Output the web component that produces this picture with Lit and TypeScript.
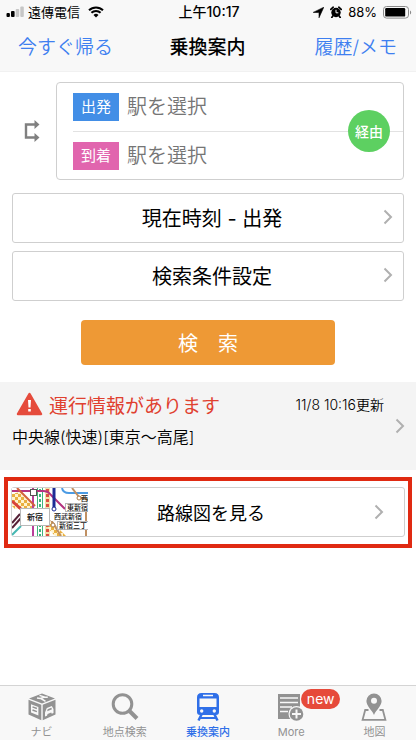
import { LitElement, html, css, svg } from "lit";
import { customElement, property } from "lit/decorators.js";
import { classMap } from "lit/directives/class-map.js";

const base = css`
  * {
    box-sizing: border-box;
  }
  button,
  input {
    font: inherit;
    color: inherit;
    margin: 0;
    padding: 0;
    border: 0;
    background: none;
  }
  svg {
    display: block;
    flex: none;
  }
`;

const chevron = html`<svg class="chevron" width="10" height="16" viewBox="0 0 10 16" aria-hidden="true">
  <path d="M1.5 1.5 8 8l-6.5 6.5" fill="none" stroke="#b0b0b0" stroke-width="2" />
</svg>`;

@customElement("status-bar")
class StatusBar extends LitElement {
  static styles = [
    base,
    css`
      :host {
        display: grid;
        grid-template-columns: 1fr auto 1fr;
        align-items: center;
        height: 24px;
        padding: 0 4px 0 6px;
        font-size: 13px;
        line-height: 24px;
      }
      .side {
        display: flex;
        align-items: center;
        gap: 4px;
      }
      .right {
        justify-content: flex-end;
        gap: 6px;
      }
      .wifi {
        margin-left: 4px;
      }
      .time {
        font-size: 14px;
        font-weight: 500;
      }
      .level {
        font-size: 13px;
      }
    `,
  ];

  render() {
    return html`
      <div class="side">
        <svg width="18" height="12" viewBox="0 0 18 12" aria-hidden="true">
          <rect x="0.5" y="7" width="3.4" height="4" rx="1" />
          <rect x="5" y="5" width="3.6" height="6" rx="1" />
          <rect x="9.7" y="3" width="3.5" height="8" rx="1" fill="#c6c6c6" />
          <rect x="14.3" y="0.5" width="3.5" height="10.5" rx="1" fill="#c6c6c6" />
        </svg>
        <span>遠傳電信</span>
        <svg class="wifi" width="16" height="12" viewBox="0 0 16 12" aria-hidden="true">
          <path d="M1 4.3a10 10 0 0 1 14 0M3.4 6.8a6.5 6.5 0 0 1 9.2 0" fill="none" stroke="#000" stroke-width="2" />
          <path d="M5.5 9.1a3.5 3.5 0 0 1 5 0L8 11.6z" />
        </svg>
      </div>
      <div class="time">上午10:17</div>
      <div class="side right">
        <svg width="11" height="11" viewBox="0 0 11 11" aria-hidden="true">
          <path d="M10.8.2 6 10.8V5.6L.2 5.4z" stroke="#000" stroke-width=".6" />
        </svg>
        <svg width="12" height="12" viewBox="0 0 12 12" aria-hidden="true">
          <circle cx="6" cy="6.5" r="4.7" />
          <path d="M.8 3.4 3.2 1.2M11.2 3.4 8.8 1.2M2.8 10 1.8 11.4M9.2 10l1 1.4" stroke="#000" stroke-width="1.7" stroke-linecap="round" />
          <path d="M6 3.8v3h2.3" fill="none" stroke="#f8f8f8" stroke-width="1" />
        </svg>
        <span class="level">88%</span>
        <svg width="29" height="13" viewBox="0 0 29 13" aria-hidden="true">
          <rect x="0.5" y="0.5" width="25" height="11.6" rx="3" fill="none" stroke="#8a8a8a" />
          <rect x="2.2" y="2" width="20" height="8.6" rx="1.2" />
          <path d="M27 4.4c1.6.6 1.6 3.4 0 4z" fill="#8a8a8a" />
        </svg>
      </div>
    `;
  }
}

@customElement("station-form")
class StationForm extends LitElement {
  static styles = [
    base,
    css`
      :host {
        display: flex;
        align-items: center;
      }
      .swap {
        flex: none;
        width: 44px;
        padding-left: 12px;
      }
      .box {
        position: relative;
        flex: 1;
        min-width: 0;
        border: 1px solid #cfcfcf;
        border-radius: 4px;
        padding-left: 16px;
      }
      .row {
        display: flex;
        align-items: center;
        gap: 8px;
        height: 48px;
      }
      .row + .row {
        border-top: 1px solid #e2e2e2;
      }
      .tag {
        flex: none;
        width: 46px;
        height: 28px;
        line-height: 28px;
        text-align: center;
        font-size: 15px;
        color: #fff;
        background: #428ee6;
      }
      .arrive {
        background: #e165ae;
      }
      .station {
        flex: 1;
        min-width: 0;
        font-size: 20px;
        font-weight: 350;
      }
      .station::placeholder {
        color: #757575;
        opacity: 1;
      }
      .via {
        position: absolute;
        right: 13px;
        top: 50%;
        width: 42px;
        height: 42px;
        margin-top: -21px;
        border-radius: 50%;
        background: #5dd061;
        color: #fff;
        font-size: 14px;
        font-weight: 500;
      }
    `,
  ];

  render() {
    return html`
      <button class="swap" aria-label="出発と到着を入れ替える">
        <svg width="17" height="22" viewBox="0 0 17 22" aria-hidden="true">
          <path d="M11 4.5H2v13h9" fill="none" stroke="#808080" stroke-width="2.4" />
          <path d="M10.5 0v9l5-4.5zM10.5 13v9l5-4.5z" fill="#808080" />
        </svg>
      </button>
      <div class="box">
        <div class="row">
          <label class="tag" for="from">出発</label>
          <input class="station" id="from" type="text" placeholder="駅を選択" />
        </div>
        <div class="row">
          <label class="tag arrive" for="to">到着</label>
          <input class="station" id="to" type="text" placeholder="駅を選択" />
        </div>
        <button class="via">経由</button>
      </div>
    `;
  }
}

@customElement("map-thumb")
class MapThumb extends LitElement {
  static styles = [
    base,
    css`
      :host {
        display: block;
      }
      .name {
        font-size: 7px;
        font-weight: 500;
      }
      .hub {
        font-size: 8px;
      }
    `,
  ];

  render() {
    return html`<svg width="76" height="48" viewBox="0 0 76 48" aria-hidden="true">
      <defs>
        <pattern id="gold" width="6" height="6" patternUnits="userSpaceOnUse">
          <rect width="6" height="6" fill="#fff3cf" />
          <path d="M0 0h3v3H0zM3 3h3v3H3z" fill="#e9b040" />
        </pattern>
        <pattern id="green" x="25" width="6" height="5" patternUnits="userSpaceOnUse">
          <rect width="6" height="5" fill="#fff" />
          <path d="M0 0h1v5H0zM5 0h1v5H5zM2 1h2v3H2z" fill="#3fb57b" />
        </pattern>
        <pattern id="rose" x="33" width="5" height="5" patternUnits="userSpaceOnUse">
          <rect width="5" height="5" fill="#f3e2a8" />
          <path d="M1 1h3v3H1z" fill="#dd4f43" />
        </pattern>
      </defs>
      <rect width="76" height="48" fill="#fff" />
      <path d="M0 6 8 4l16 17H3L0 18z" fill="url(#gold)" />
      <path d="M25 0h6v48h-6z" fill="url(#green)" />
      <path d="M33 0h5v48h-5z" fill="url(#rose)" />
      <path d="M39 33 54 48H43l-7-8z" fill="url(#gold)" />
      <g fill="none">
        <path d="M21 0v48" stroke="#bb3f9a" stroke-width="2" />
        <path d="M0 3h31q5 0 8 4l14 14" stroke="#b5337f" stroke-width="2" />
        <path d="m5 0 18 18" stroke="#d3613c" stroke-width="2" />
        <path d="m0 13 9 8" stroke="#d8433c" stroke-width="3" />
        <path d="m0 35 8-9M0 40l9-10" stroke="#562238" stroke-width="2" />
        <path d="m0 47 9-9" stroke="#46b7b2" stroke-width="2" />
        <path d="M42 0v20" stroke="#1d2c96" stroke-width="3" />
        <path d="M50 0q1 5 7 5h19" stroke="#4b9be4" stroke-width="2" />
        <path d="m60 0 7 9 9 3M74 20v28M39 32l10 16" stroke="#c09062" stroke-width="2" />
      </g>
      <g fill="#fff" stroke="#555">
        <rect x="18.5" y="1.5" width="6" height="6" />
        <circle cx="42" cy="21" r="2" stroke="#1d2c96" />
        <circle cx="67" cy="10" r="2" stroke="#a87848" />
        <circle cx="41" cy="37" r="2" stroke="#a87848" />
      </g>
      <g fill="#fff" stroke="#b8b8b8">
        <rect x="8.5" y="20.5" width="29" height="17" />
        <rect x="53.5" y="15.5" width="26" height="8" />
        <path d="M39 24h33v9H39z" stroke="none" />
        <rect x="45.5" y="33.5" width="34" height="8" />
      </g>
      <g class="name" fill="#111">
        <text class="hub" x="15" y="32">新宿</text>
        <text x="69" y="13">西</text>
        <text x="55" y="22">東新宿</text>
        <text x="42" y="31">西武新宿</text>
        <text x="47" y="40">新宿三丁</text>
      </g>
    </svg>`;
  }
}

const icons = {
  navi: svg`
    <path d="M15 1.5 28 6.500 15 11.600 2 6.500zM1.500 7.800l12.800 5v15.400L1.500 22.500zM28.500 7.800l-12.800 5v15.400l12.800-5.700z" fill="currentColor"/>
    <path d="m4 12.200 7.400 2.900v8.400L4 20.600z" fill="#f8f8f8"/>
    <path d="m5.500 14.800 4.400 1.700M5.500 18l4.400 1.700" stroke="currentColor" stroke-width="1.400"/>
    <path d="m12.500 3.400 5.500 1.800 2.800.1M17.500 5l-4 1.500-3.500-.6M14 6.500l4.500 2.800" fill="none" stroke="#f8f8f8" stroke-width="1.500"/>
    <path d="m18 20.500 1.800-4.600 5-2 1.700 3v4.200l-1.700.7-.6-1.300-3.600 1.500-.6 1.800-2 .8z" fill="#f8f8f8"/>
    <path d="m20.600 17.200 3.700-1.500.7 1.500-4.800 2z" fill="currentColor"/>`,
  search: svg`
    <circle cx="12.500" cy="12" r="9.300" fill="none" stroke="currentColor" stroke-width="3"/>
    <path d="m19 18.500 8 8" stroke="currentColor" stroke-width="4"/>`,
  train: svg`
    <path d="M8.500 1h13Q26 1 26 5.500V20q0 3-3 3H7q-3 0-3-3V5.500Q4 1 8.500 1z" fill="currentColor"/>
    <path d="M10 3.500h10" stroke="#f8f8f8" stroke-width="1.500"/>
    <path d="M6.500 6.500h17V15h-17z" fill="#f8f8f8"/>
    <circle cx="8.700" cy="19" r="1.700" fill="#f8f8f8"/>
    <circle cx="21.300" cy="19" r="1.700" fill="#f8f8f8"/>
    <path d="m8.500 22.500-3 6M21.500 22.500l3 6" stroke="currentColor" stroke-width="2.500"/>
    <path d="M7 26h16" stroke="currentColor" stroke-width="2"/>`,
  more: svg`
    <path d="M2 2h22v25H2z" fill="currentColor"/>
    <path d="M4 6h18M4 10.500h18M4 15h12M4 19.500h8" stroke="#f8f8f8" stroke-width="1.600"/>
    <circle cx="20.500" cy="22" r="8" fill="#f8f8f8"/>
    <circle cx="20.500" cy="22" r="6.800" fill="currentColor"/>
    <path d="M20.500 17.500v9M16 22h9" stroke="#f8f8f8" stroke-width="2"/>`,
  map: svg`
    <path d="M15 1.500a7.600 7.600 0 0 1 7.600 7.600c0 5-5.400 9-7.600 13.900-2.200-4.900-7.600-8.900-7.600-13.900A7.600 7.600 0 0 1 15 1.500z" fill="currentColor"/>
    <circle cx="15" cy="8.800" r="3" fill="#f8f8f8"/>
    <path d="M9.500 18H6.200L3.600 27.800h22.800L23.800 18h-3.300" fill="none" stroke="currentColor" stroke-width="1.800"/>`,
};

interface Tab {
  id: keyof typeof icons;
  label: string;
  badge?: string;
}

const tabs: Tab[] = [
  { id: "navi", label: "ナビ" },
  { id: "search", label: "地点検索" },
  { id: "train", label: "乗換案内" },
  { id: "more", label: "More", badge: "new" },
  { id: "map", label: "地図" },
];

@customElement("tab-bar")
class TabBar extends LitElement {
  @property() active = "train";

  static styles = [
    base,
    css`
      :host {
        display: block;
      }
      .tabs {
        display: grid;
        grid-template-columns: repeat(5, 1fr);
        height: 55px;
        background: #f8f8f8;
        border-top: 1px solid #d4d4d4;
      }
      .tab {
        position: relative;
        display: flex;
        flex-direction: column;
        align-items: center;
        padding-top: 6px;
        color: #929292;
        font-size: 11px;
        line-height: 16px;
      }
      .label {
        margin-top: 2px;
      }
      .active {
        color: #2f6fe8;
        font-weight: 500;
      }
      .badge {
        position: absolute;
        top: 3px;
        left: 50%;
        margin-left: 10px;
        width: 39px;
        border-radius: 10px;
        background: #e64a3a;
        color: #fff;
        font-size: 14px;
        line-height: 20px;
        text-align: center;
      }
    `,
  ];

  render() {
    return html`<nav class="tabs">
      ${tabs.map(
        (t) => html`<button class=${classMap({ tab: true, active: t.id === this.active })} @click=${() => (this.active = t.id)}>
          <svg width="30" height="30" viewBox="0 0 30 30" aria-hidden="true">${icons[t.id]}</svg>
          <span class="label">${t.label}</span>
          ${t.badge ? html`<span class="badge">${t.badge}</span>` : null}
        </button>`
      )}
    </nav>`;
  }
}

@customElement("app-root")
class AppRoot extends LitElement {
  static styles = [
    base,
    css`
      :host {
        display: flex;
        flex-direction: column;
        min-height: 100vh;
        background: #fff;
        color: #000;
        font-family: Inter, "Noto Sans CJK JP", sans-serif;
      }
      .header {
        background: #f8f8f8;
        border-bottom: 1px solid #f1f1f1;
      }
      .nav {
        display: grid;
        grid-template-columns: 1fr auto 1fr;
        align-items: center;
        height: 47px;
        padding: 0 19px 4px 18px;
        font-size: 19px;
      }
      .link {
        justify-self: start;
        color: #3e7ff0;
        text-decoration: none;
        font-weight: 350;
      }
      .end {
        justify-self: end;
      }
      .title {
        margin: 0;
        font-size: 19px;
        font-weight: 500;
      }
      .main {
        flex: 1;
      }
      .form {
        display: flex;
        flex-direction: column;
        gap: 8px;
        padding: 10px 12px 17px;
      }
      .stations {
        margin-bottom: 5px;
      }
      .option {
        display: grid;
        grid-template-columns: 1fr auto 1fr;
        align-items: center;
        height: 50px;
        padding: 0 10px 2px 18px;
        border: 1px solid #cfcfcf;
        border-radius: 3px;
        font-size: 20px;
      }
      .option .text {
        grid-column: 2;
      }
      .option .chevron {
        justify-self: end;
      }
      .submit {
        width: 65%;
        height: 45px;
        margin: 11px auto 0;
        border-radius: 4px;
        background: #ee9935;
        color: #fff;
        font-size: 20px;
      }
      .notice {
        display: flex;
        align-items: center;
        height: 88px;
        padding: 0 11px 0 12px;
        background: #f4f4f4;
        color: inherit;
        text-decoration: none;
      }
      .body {
        flex: 1;
        padding-bottom: 10px;
      }
      .head {
        display: flex;
        align-items: center;
        height: 32px;
        padding: 0 11px 0 4px;
      }
      .alert {
        margin: 0 6px 0 0;
        flex: none;
      }
      .subject {
        flex: 1;
        color: #e0402f;
        font-size: 19px;
      }
      .updated {
        font-size: 14px;
        font-weight: 350;
      }
      .line {
        margin: 0;
        font-size: 16px;
        font-weight: 350;
        line-height: 34px;
      }
      .frame {
        margin: 7px 4px;
        padding: 6px 3px 7px 3px;
        border: 4px solid #e02a12;
      }
      .map {
        width: 100%;
        padding: 0 20px 0 0;
        font-size: 18px;
      }
      .map .text {
        padding-left: 26px;
      }
    `,
  ];

  render() {
    return html`
      <header class="header">
        <status-bar></status-bar>
        <div class="nav">
          <a class="link" href="#home">今すぐ帰る</a>
          <h1 class="title">乗換案内</h1>
          <a class="link end" href="#history">履歴/メモ</a>
        </div>
      </header>
      <main class="main">
        <form class="form" @submit=${(e: Event) => e.preventDefault()}>
          <station-form class="stations"></station-form>
          <button class="option" type="button"><span class="text">現在時刻 - 出発</span>${chevron}</button>
          <button class="option" type="button"><span class="text">検索条件設定</span>${chevron}</button>
          <button class="submit" type="submit">検　索</button>
        </form>
        <a class="notice" href="#status">
          <div class="body">
            <div class="head">
              <svg class="alert" width="27" height="24" viewBox="0 0 27 24" aria-hidden="true">
                <path d="M13.5 2 25 22H2z" fill="#e54b3c" stroke="#e54b3c" stroke-width="2.5" stroke-linejoin="round" />
                <path d="M12 8h3l-.5 7.5h-2zM12.2 17h2.6v2.6h-2.6z" fill="#fff" />
              </svg>
              <span class="subject">運行情報があります</span>
              <time class="updated">11/8 10:16更新</time>
            </div>
            <p class="line">中央線(快速)[東京〜高尾]</p>
          </div>
          ${chevron}
        </a>
        <div class="frame">
          <button class="option map"><map-thumb></map-thumb><span class="text">路線図を見る</span>${chevron}</button>
        </div>
      </main>
      <tab-bar></tab-bar>
    `;
  }
}
